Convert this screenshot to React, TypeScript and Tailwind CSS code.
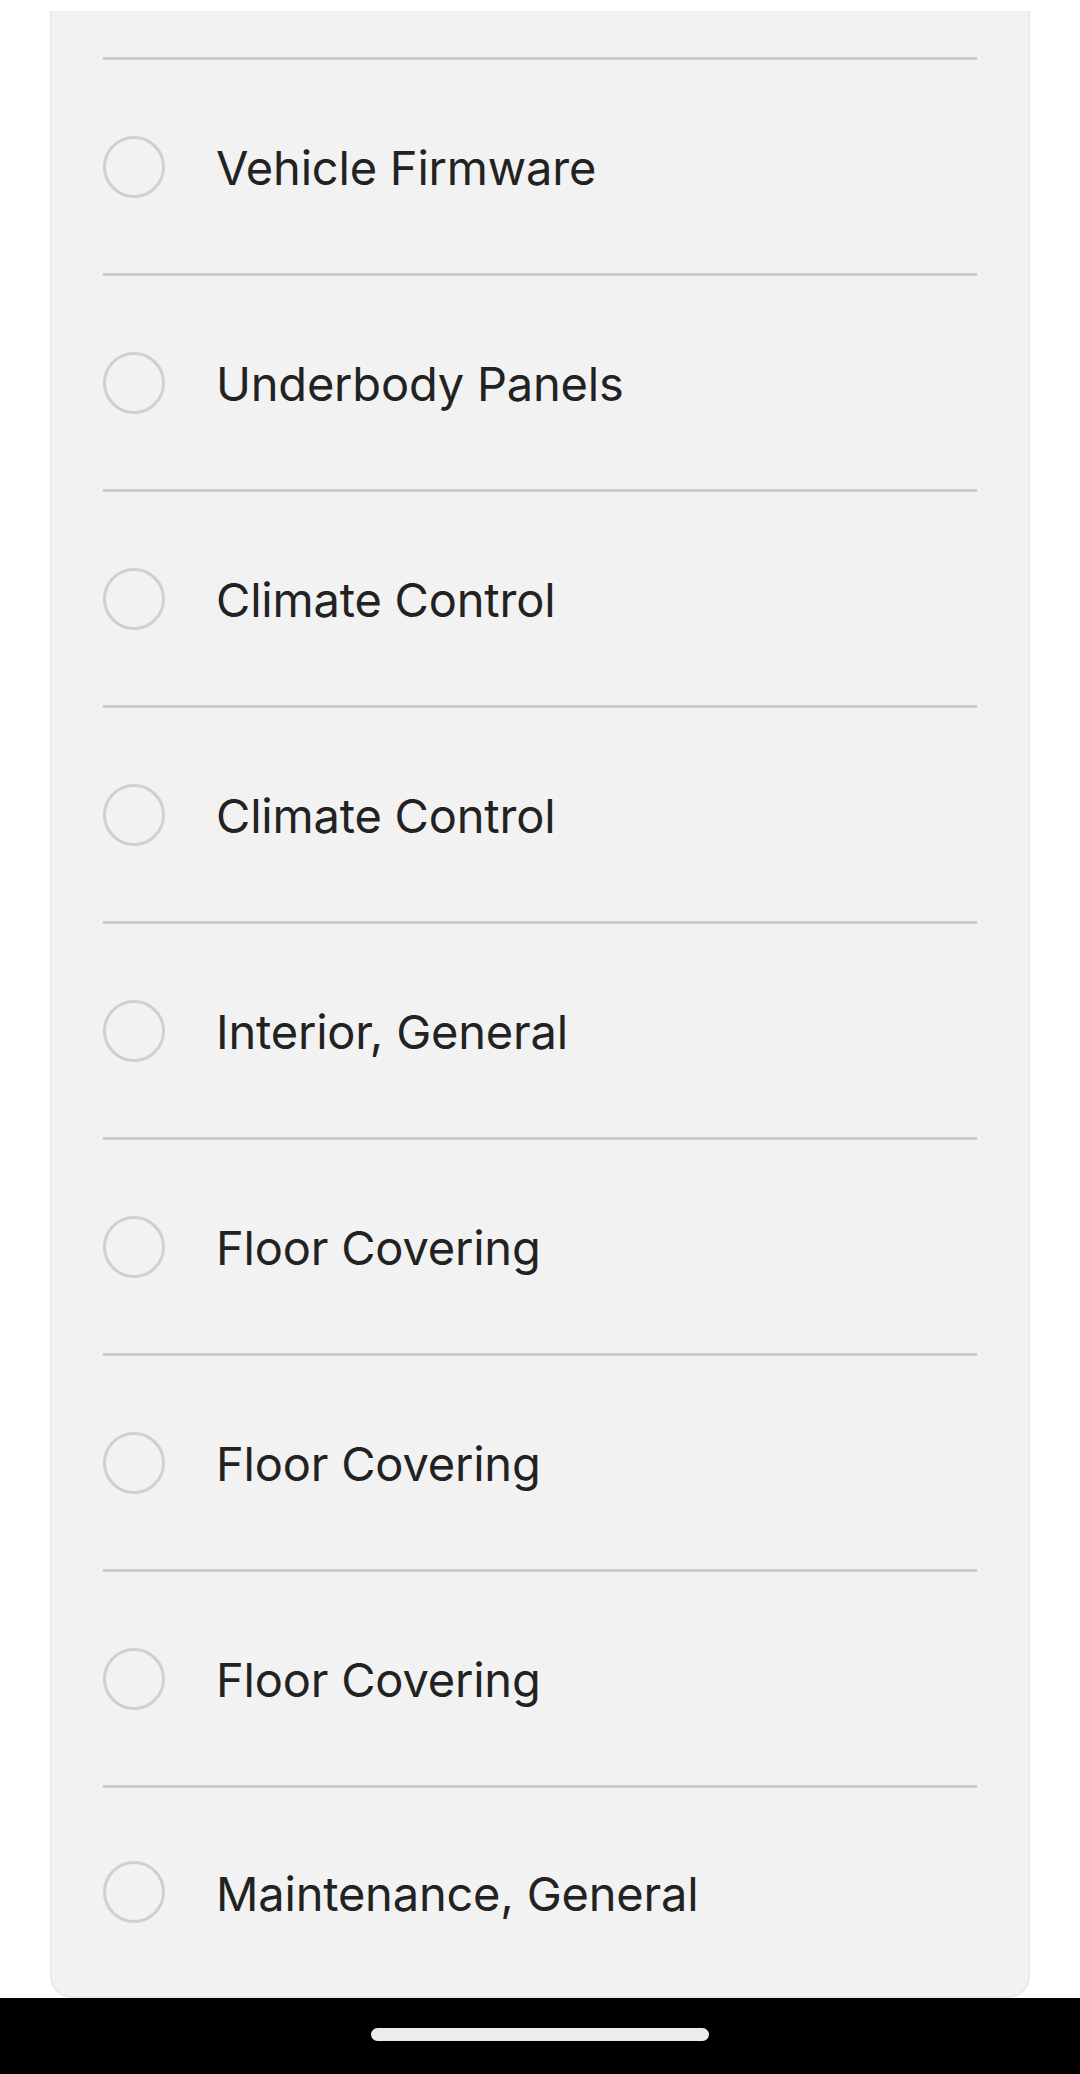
import React from "react";

const items = [
  "Vehicle Firmware",
  "Underbody Panels",
  "Climate Control",
  "Climate Control",
  "Interior, General",
  "Floor Covering",
  "Floor Covering",
  "Floor Covering",
  "Maintenance, General",
];

export default function App() {
  return (
    <div className="w-[1080px] h-[2074px] bg-white flex flex-col overflow-hidden" style={{ fontFamily: "Inter, 'Liberation Sans', sans-serif" }}>
      <div className="pt-[11px] px-[50px] flex-1 flex flex-col min-h-0">
        <div className="flex-1 min-h-0 bg-[#f2f2f2] border-x-2 border-b-2 border-[#e9e9e9] rounded-b-[22px] pt-[46px] px-[51px] flex flex-col overflow-hidden">
          {items.map((label, i) => (
            <div key={i} className="flex flex-col shrink-0">
              <div className="h-[3px] bg-[#cdcdcd]" />
              <div className={i === items.length - 1 ? "h-[208px] flex items-center" : "h-[213px] flex items-center"}>
                <div className="w-[62px] h-[62px] rounded-full border-[3px] border-[#d0d0d0] shrink-0" />
                <span className="ml-[51px] mt-[2px] text-[47px] leading-none text-[#222222] tracking-[-0.2px]">{label}</span>
              </div>
            </div>
          ))}
        </div>
      </div>
      <div className="h-[76px] bg-black flex items-start justify-center shrink-0">
        <div className="mt-[30px] w-[338px] h-[13px] rounded-full bg-[#ececec]" />
      </div>
    </div>
  );
}
